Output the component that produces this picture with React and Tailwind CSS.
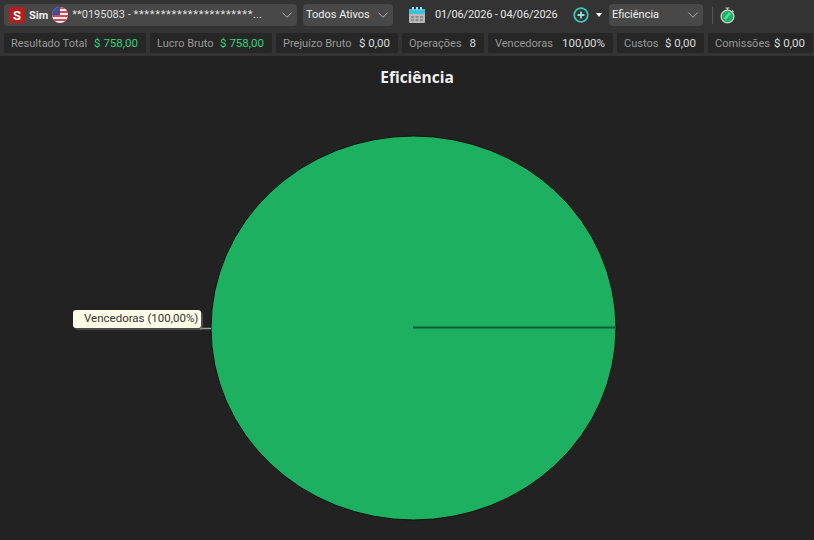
import React from "react";
import { ChevronDown } from "lucide-react";

const stats = [
  { label: "Resultado Total", value: "$ 758,00", green: true, width: "w-[142px]" },
  { label: "Lucro Bruto", value: "$ 758,00", green: true, width: "w-[122px]" },
  { label: "Prejuízo Bruto", value: "$ 0,00", width: "w-[122px]" },
  { label: "Operações", value: "8", width: "w-[82px]" },
  { label: "Vencedoras", value: "100,00%", width: "w-[125px]" },
  { label: "Custos", value: "$ 0,00", width: "w-[87px]" },
  { label: "Comissões", value: "$ 0,00", width: "w-[105px]" },
];

const UsFlag = () => (
  <svg width="16" height="16" viewBox="0 0 16 16" className="shrink-0">
    <defs>
      <clipPath id="flag-clip">
        <circle cx="8" cy="8" r="8" />
      </clipPath>
    </defs>
    <g clipPath="url(#flag-clip)">
      <rect width="16" height="16" fill="#f1eef0" />
      <rect y="0" width="16" height="2" fill="#d8455a" />
      <rect y="4" width="16" height="2" fill="#d8455a" />
      <rect y="8" width="16" height="2" fill="#d8455a" />
      <rect y="12" width="16" height="2" fill="#d8455a" />
      <rect width="8" height="8" fill="#3f4f96" />
    </g>
  </svg>
);

const CalendarIcon = () => (
  <svg width="16" height="16" viewBox="0 0 16 16" className="shrink-0">
    <rect x="0" y="2" width="16" height="14" rx="1" fill="#b9b9b9" />
    <rect x="0" y="2" width="16" height="5" fill="#3fc0d8" />
    <rect x="3" y="0" width="2" height="3" fill="#8fe0ee" />
    <rect x="7" y="0" width="2" height="3" fill="#8fe0ee" />
    <rect x="11" y="0" width="2" height="3" fill="#8fe0ee" />
    <path d="M2 9h3v2H2zM6.5 9h3v2h-3zM11 9h3v2h-3zM2 12h3v2H2zM6.5 12h3v2h-3zM11 12h3v2h-3z" fill="#8c8c8c" />
  </svg>
);

const PlusIcon = () => (
  <svg width="16" height="16" viewBox="0 0 16 16" className="shrink-0">
    <circle cx="8" cy="8" r="6.8" fill="none" stroke="#3cc4b4" strokeWidth="1.8" />
    <path d="M8 4.5v7M4.5 8h7" stroke="#8fe3d8" strokeWidth="1.8" />
  </svg>
);

const Stopwatch = () => (
  <svg width="15" height="17" viewBox="0 0 15 17" className="shrink-0">
    <circle cx="7.5" cy="9.5" r="6.4" fill="#1fae64" stroke="#c9c9c9" strokeWidth="1.3" />
    <path d="M5.5 1h4M7.5 1v2M12 3.5l1.5 1.5" stroke="#c9c9c9" strokeWidth="1.2" fill="none" />
    <path d="M5 12 10 6" stroke="#4ce596" strokeWidth="2.5" />
  </svg>
);

const Select = ({ className, children }) => (
  <div className={`flex h-[22px] items-center rounded-[4px] bg-[#484848] pl-[3px] pr-[1px] ${className}`}>
    <div className="flex min-w-0 flex-1 items-center">{children}</div>
    <ChevronDown size={18} strokeWidth={1.1} className="shrink-0 text-[#c4c4c4]" />
  </div>
);

export default function App() {
  return (
    <div
      className="flex h-[540px] w-[814px] flex-col overflow-hidden bg-[#222222] text-[11px] text-[#e4e4e4]"
      style={{ fontFamily: "Roboto, sans-serif" }}
    >
      <div className="flex h-[30px] items-center bg-[#333333] pl-[4px]">
        <Select className="w-[293px]">
          <div className="ml-[2px] flex h-[16px] w-[16px] shrink-0 items-center justify-center rounded-[2px] bg-[#b3201f] text-[13px] font-bold leading-none text-white">
            S
          </div>
          <span className="ml-[4px] font-bold leading-none text-[#eeeeee]">Sim</span>
          <span className="ml-[4px]">
            <UsFlag />
          </span>
          <span className="ml-[4px] whitespace-nowrap text-[#dddddd]">
            **0195083 - <span className="tracking-[0.7px]">**********************</span>...
          </span>
        </Select>
        <Select className="ml-[6px] w-[90px]">
          <span className="whitespace-nowrap text-[#eeeeee]">Todos Ativos</span>
        </Select>
        <div className="ml-[16px]">
          <CalendarIcon />
        </div>
        <span className="ml-[10px] w-[123px] whitespace-nowrap tracking-[-0.13px] text-[#e8e8e8]">
          01/06/2026 - 04/06/2026
        </span>
        <div className="ml-[15px]">
          <PlusIcon />
        </div>
        <div className="ml-[7px] h-0 w-0 border-x-[3.5px] border-t-[4px] border-x-transparent border-t-white" />
        <Select className="ml-[7px] w-[94px]">
          <span className="whitespace-nowrap text-[#eeeeee]">Eficiência</span>
        </Select>
        <div className="ml-[9px] h-[17px] w-px bg-[#555555]" />
        <div className="ml-[7px]">
          <Stopwatch />
        </div>
      </div>

      <div className="flex h-[26px] items-start gap-[4px] bg-[#333333] pl-[4px] pt-[3px]">
        {stats.map((s) => (
          <div
            key={s.label}
            className={`flex h-[20px] shrink-0 items-center justify-between rounded-[2px] bg-[#262626] pl-[7px] pr-[8px] pt-[2px] ${s.width}`}
          >
            <span className="whitespace-nowrap text-[#999999]">{s.label}</span>
            <span className={`whitespace-nowrap text-[11.5px] ${s.green ? "text-[#2ed47f]" : "text-[#dcdcdc]"}`}>
              {s.value}
            </span>
          </div>
        ))}
      </div>

      <div className="relative flex-1">
        <h1
          className="pt-[12px] pl-[20px] text-center text-[15.5px] font-bold leading-[18px] text-[#f0f0f0]"
          style={{ fontFamily: '"Open Sans", sans-serif' }}
        >
          Eficiência
        </h1>
        <svg width="814" height="484" viewBox="0 56 814 484" className="absolute left-0 top-0">
          <ellipse cx="413.5" cy="328" rx="202.5" ry="192" fill="#1cb060" stroke="#101010" strokeWidth="1" />
          <line x1="413" y1="327.5" x2="616" y2="327.5" stroke="#115c35" strokeWidth="2" />
          <line x1="200" y1="328.5" x2="211" y2="328.5" stroke="#9a9a9a" strokeWidth="1.5" />
        </svg>
        <div className="absolute left-[73px] top-[254px] flex h-[18px] w-[128px] items-center rounded-[3px] bg-[#fffde8] pl-[11px] text-[11.5px] text-[#333333] shadow-[2px_2px_1px_rgba(120,120,120,0.5)]">
          Vencedoras (100,00%)
        </div>
      </div>
    </div>
  );
}
